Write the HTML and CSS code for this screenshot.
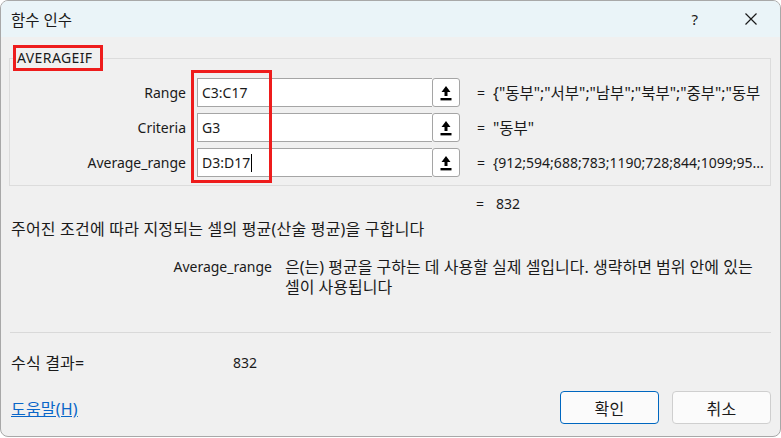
FILE: index.html
```html
<!DOCTYPE html>
<html lang="ko">
  <head>
    <meta charset="UTF-8" />
    <title>함수 인수</title>
    <link rel="stylesheet" href="styles.css">
  </head>
  <body>
    <div class="window">
      <div class="titlebar">
        <span class="title">함수 인수</span>
        <span class="help">?</span>
        <span class="close">
          <svg width="12" height="12" viewBox="0 0 12 12">
            <path d="M0.5 0.5 L11.5 11.5 M11.5 0.5 L0.5 11.5" stroke="#1a1a1a" stroke-width="1.2" fill="none" />
          </svg>
        </span>
      </div>

      <div class="content">
        <fieldset class="group">
          <legend class="func-name">AVERAGEIF</legend>

          <div class="arg-list">
            <div class="highlight"></div>

            <div class="arg-row">
              <label class="arg-label">Range</label>
              <div class="arg-input">
                <span class="arg-text">C3:C17</span>
                <span class="ref-btn">
                  <svg width="12" height="16" viewBox="0 0 12 16">
                    <path d="M6 1 L10.5 7 L7.5 7 L7.5 11 L4.5 11 L4.5 7 L1.5 7 Z" fill="#000" />
                    <rect x="0.5" y="13" width="11" height="2.4" fill="#000" />
                  </svg>
                </span>
              </div>
              <span class="eq">=</span>
              <span class="arg-value ko-mix">{"동부";"서부";"남부";"북부";"중부";"동부</span>
            </div>

            <div class="arg-row">
              <label class="arg-label">Criteria</label>
              <div class="arg-input">
                <span class="arg-text">G3</span>
                <span class="ref-btn">
                  <svg width="12" height="16" viewBox="0 0 12 16">
                    <path d="M6 1 L10.5 7 L7.5 7 L7.5 11 L4.5 11 L4.5 7 L1.5 7 Z" fill="#000" />
                    <rect x="0.5" y="13" width="11" height="2.4" fill="#000" />
                  </svg>
                </span>
              </div>
              <span class="eq">=</span>
              <span class="arg-value ko-mix">"동부"</span>
            </div>

            <div class="arg-row">
              <label class="arg-label">Average_range</label>
              <div class="arg-input">
                <span class="arg-text">D3:D17<span class="caret"></span></span>
                <span class="ref-btn">
                  <svg width="12" height="16" viewBox="0 0 12 16">
                    <path d="M6 1 L10.5 7 L7.5 7 L7.5 11 L4.5 11 L4.5 7 L1.5 7 Z" fill="#000" />
                    <rect x="0.5" y="13" width="11" height="2.4" fill="#000" />
                  </svg>
                </span>
              </div>
              <span class="eq">=</span>
              <span class="arg-value">{912;594;688;783;1190;728;844;1099;95...</span>
            </div>
          </div>
        </fieldset>

        <div class="result-row">
          <span class="eq">=</span>
          <span class="result-value">832</span>
        </div>

        <p class="summary ko">주어진 조건에 따라 지정되는 셀의 평균(산술 평균)을 구합니다</p>

        <div class="arg-help">
          <span class="arg-help-name">Average_range</span>
          <span class="arg-help-text ko">은(는) 평균을 구하는 데 사용할 실제 셀입니다. 생략하면 범위 안에 있는<br />셀이 사용됩니다</span>
        </div>

        <hr class="divider" />

        <div class="formula-result">
          <span class="formula-label ko">수식 결과=</span>
          <span>832</span>
        </div>

        <div class="footer">
          <a class="help-link ko" href="#">도움말(H)</a>
          <div class="buttons">
            <button class="btn primary ko">확인</button>
            <button class="btn ko">취소</button>
          </div>
        </div>
      </div>
    </div>
  </body>
</html>
```

FILE: styles.css
```css
body {
  margin: 0;
  background-color: #ffffff;
  font-family: "Noto Sans", "Noto Sans CJK KR", sans-serif;
  font-size: 14px;
  color: #1a1a1a;
}
.ko {
  font-size: 16px;
  letter-spacing: 0.2px;
}
.ko-mix {
  font-size: 15.5px;
}
.window {
  width: 779px;
  height: 435px;
  border: 1px solid #a8a8a8;
  border-radius: 8px;
  background-color: #f0f0f0;
  overflow: hidden;
}
.titlebar {
  display: flex;
  align-items: center;
  height: 36px;
  background-color: #eaf4f8;
  padding-left: 10px;
}
.title {
  flex: 1;
  font-size: 15.5px;
}
.help {
  margin-right: 47px;
  font-size: 15px;
}
.close {
  display: flex;
  padding-right: 23px;
}
.content {
  padding: 0 9px 0 8px;
}
.group {
  margin: 8px 0 0 0;
  padding: 4px 0 5px 0;
  border: 1px solid #dcdcdc;
}
.func-name {
  margin-left: 3px;
  padding: 1px 7px 2px 1px;
  border: 3px solid #ee1c1c;
  line-height: 17px;
  letter-spacing: 0.4px;
}
.arg-list {
  position: relative;
}
.highlight {
  position: absolute;
  left: 181px;
  top: -5px;
  width: 75px;
  height: 107px;
  border: 3px solid #ee1c1c;
}
.arg-row {
  display: flex;
  align-items: center;
  height: 35px;
}
.arg-label {
  width: 176px;
  text-align: right;
  margin-right: 11px;
}
.arg-input {
  display: flex;
  width: 263px;
  height: 29px;
}
.arg-text {
  flex: 1;
  display: flex;
  align-items: center;
  padding-left: 4px;
  background-color: #ffffff;
  border: 1px solid #a5a5a5;
  border-right: none;
}
.caret {
  display: inline-block;
  width: 1px;
  height: 18px;
  background-color: #000;
  margin-left: 1px;
}
.ref-btn {
  display: flex;
  align-items: center;
  justify-content: center;
  width: 26px;
  background-color: #ffffff;
  border: 1px solid #a5a5a5;
  border-radius: 3px;
}
.eq {
  width: 33px;
  padding-left: 17px;
  box-sizing: border-box;
}
.arg-value {
  width: 274px;
  white-space: nowrap;
  overflow: hidden;
}
.result-row {
  display: flex;
  margin-top: 8px;
  padding-left: 450px;
  line-height: 20px;
}
.result-value {
  padding-left: 4px;
}
.summary {
  margin: 5px 0 0 2px;
  line-height: 20px;
}
.arg-help {
  display: flex;
  margin-top: 18px;
  line-height: 20px;
}
.arg-help-name {
  width: 263px;
  text-align: right;
  margin-right: 13px;
}
.arg-help-text {
  letter-spacing: 0;
}
.divider {
  margin: 35px 0 0 1px;
  border: none;
  border-top: 1px solid #d9d9d9;
}
.formula-result {
  display: flex;
  align-items: center;
  margin: 20px 0 0 2px;
  line-height: 20px;
}
.formula-label {
  width: 222px;
}
.footer {
  display: flex;
  align-items: center;
  justify-content: space-between;
  margin-top: 18px;
  padding-left: 2px;
}
.help-link {
  color: #0a66c8;
}
.buttons {
  display: flex;
  gap: 13px;
}
.btn {
  width: 99px;
  height: 33px;
  font-family: inherit;
  color: #1a1a1a;
  background-color: #fbfbfb;
  border: 1px solid #cfcfcf;
  border-radius: 4px;
}
.primary {
  border-color: #0067c0;
}
```
